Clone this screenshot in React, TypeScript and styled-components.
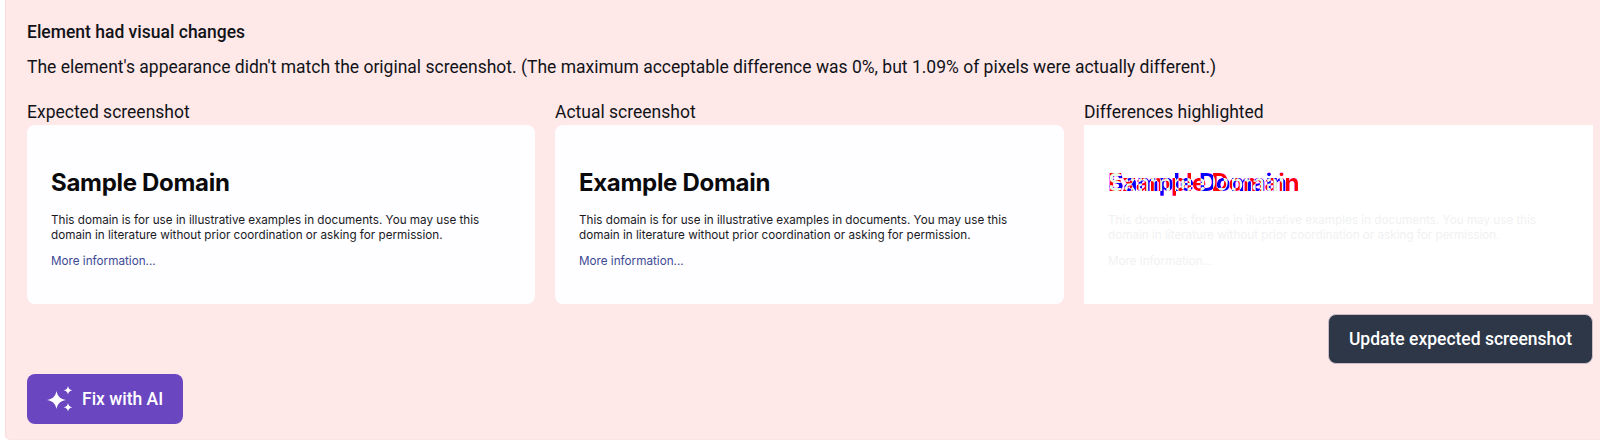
import styled, { createGlobalStyle } from "styled-components";

const GlobalStyle = createGlobalStyle`
  html, body {
    margin: 0;
    padding: 0;
    background: #ffffff;
  }
  body {
    font-family: Roboto, "Liberation Sans", sans-serif;
    color: #111318;
  }
`;

const Page = styled.div`
  width: 1600px;
  height: 441px;
  overflow: hidden;
  box-sizing: border-box;
  padding-left: 5px;
`;

const Panel = styled.section`
  box-sizing: border-box;
  height: 440px;
  padding: 20px 7px 0 21px;
  background: #fee8e8;
  border-left: 1px solid #fbdcdc;
  border-bottom: 1px solid #fbe4e4;
  border-bottom-left-radius: 5px;
`;

const Title = styled.h3`
  margin: 0;
  font-size: 17.5px;
  line-height: 24px;
  font-weight: 500;
`;

const Message = styled.p`
  margin: 11px 0 0;
  font-size: 17.5px;
  line-height: 24px;
  font-weight: 400;
`;

const Shots = styled.div`
  display: grid;
  grid-template-columns: 508px 509px 509px;
  column-gap: 20px;
  margin-top: 22px;
`;

const Shot = styled.figure`
  margin: 0;
`;

const ShotLabel = styled.figcaption`
  font-size: 17.5px;
  line-height: 22px;
  height: 24px;
`;

const Card = styled.div<{ $square?: boolean }>`
  box-sizing: border-box;
  height: 179px;
  padding: 43px 24px 0;
  background: ${(p) => (p.$square ? "#ffffff" : "#fefdff")};
  border-radius: ${(p) => (p.$square ? "0" : "8px")};
`;

const Heading = styled.div<{ $tint?: string }>`
  font-family: Inter, Roboto, sans-serif;
  font-size: 24px;
  line-height: 30px;
  height: 30px;
  font-weight: 700;
  letter-spacing: -0.3px;
  color: ${(p) => p.$tint || "#0a0a0c"};
`;

// both headings share one cell; the filter turns the overlap of the two pale
const Overlap = styled.div`
  display: grid;
  isolation: isolate;
  background: #ffffff;
  filter: url(#diff-overlap);
  & > * {
    grid-area: 1 / 1;
    mix-blend-mode: difference;
  }
`;

const Body = styled.p<{ $faded?: boolean }>`
  margin: 15px 0 0;
  width: 460px;
  font-family: Inter, Roboto, sans-serif;
  font-size: 11.7px;
  line-height: 15px;
  color: ${(p) => (p.$faded ? "#f1f1f2" : "#1a1a1f")};
`;

const More = styled.a<{ $faded?: boolean }>`
  display: block;
  margin-top: 11px;
  font-family: Inter, Roboto, sans-serif;
  font-size: 11.7px;
  line-height: 15px;
  color: ${(p) => (p.$faded ? "#f1f1f2" : "#3d4a94")};
`;

const Actions = styled.div`
  display: flex;
  justify-content: flex-end;
  margin-top: 10px;
`;

const DarkButton = styled.button`
  box-sizing: border-box;
  width: 265px;
  height: 50px;
  border: 1px solid #c9bcc6;
  border-radius: 8px;
  background: #2d3748;
  color: #ffffff;
  font-family: Roboto, sans-serif;
  font-size: 17.5px;
  font-weight: 500;
`;

const AiButton = styled.button`
  display: flex;
  align-items: center;
  gap: 9px;
  box-sizing: border-box;
  width: 156px;
  height: 50px;
  margin-top: 10px;
  padding: 0 0 0 20px;
  border: 0;
  border-radius: 8px;
  background: #6b46c1;
  color: #ffffff;
  font-family: Roboto, sans-serif;
  font-size: 17.5px;
  font-weight: 500;
`;

const HiddenDefs = styled.svg`
  display: block;
  width: 0;
  height: 0;
`;

const DiffFilter = () => (
  <HiddenDefs aria-hidden="true">
    <filter id="diff-overlap" colorInterpolationFilters="sRGB">
      <feColorMatrix values="1 0.9 0 0 0  0 1 0 0 0  0 0.9 1 0 0  0 0 0 1 0" />
    </filter>
  </HiddenDefs>
);

const Sparkles = () => (
  <svg width="26" height="26" viewBox="0 0 26 26" fill="#ffffff">
    <path d="M9.5 5 C10.8 10.5 12.6 12.4 19 14 C12.6 15.6 10.8 17.5 9.5 23 C8.2 17.5 6.4 15.6 0 14 C6.4 12.4 8.2 10.5 9.5 5 Z" />
    <path d="M21 0 C21.6 2.7 22.5 3.6 25.4 4.3 C22.5 5 21.6 5.9 21 8.6 C20.4 5.9 19.5 5 16.6 4.3 C19.5 3.6 20.4 2.7 21 0 Z" />
    <path d="M21 17 C21.6 19.7 22.5 20.6 25.4 21.3 C22.5 22 21.6 22.9 21 25.6 C20.4 22.9 19.5 22 16.6 21.3 C19.5 20.6 20.4 19.7 21 17 Z" />
  </svg>
);

const bodyText =
  "This domain is for use in illustrative examples in documents. You may use this domain in literature without prior coordination or asking for permission.";

const App = () => (
  <Page>
    <GlobalStyle />
    <DiffFilter />
    <Panel>
      <Title>Element had visual changes</Title>
      <Message>
        The element's appearance didn't match the original screenshot. (The
        maximum acceptable difference was 0%, but 1.09% of pixels were actually
        different.)
      </Message>
      <Shots>
        <Shot>
          <ShotLabel>Expected screenshot</ShotLabel>
          <Card>
            <Heading>Sample Domain</Heading>
            <Body>{bodyText}</Body>
            <More>More information...</More>
          </Card>
        </Shot>
        <Shot>
          <ShotLabel>Actual screenshot</ShotLabel>
          <Card>
            <Heading>Example Domain</Heading>
            <Body>{bodyText}</Body>
            <More>More information...</More>
          </Card>
        </Shot>
        <Shot>
          <ShotLabel>Differences highlighted</ShotLabel>
          <Card $square>
            <Overlap>
              <Heading $tint="#00ffff">Example Domain</Heading>
              <Heading $tint="#ffff00">Sample Domain</Heading>
            </Overlap>
            <Body $faded>{bodyText}</Body>
            <More $faded>More information...</More>
          </Card>
        </Shot>
      </Shots>
      <Actions>
        <DarkButton>Update expected screenshot</DarkButton>
      </Actions>
      <AiButton>
        <Sparkles />
        Fix with AI
      </AiButton>
    </Panel>
  </Page>
);

export default App;
